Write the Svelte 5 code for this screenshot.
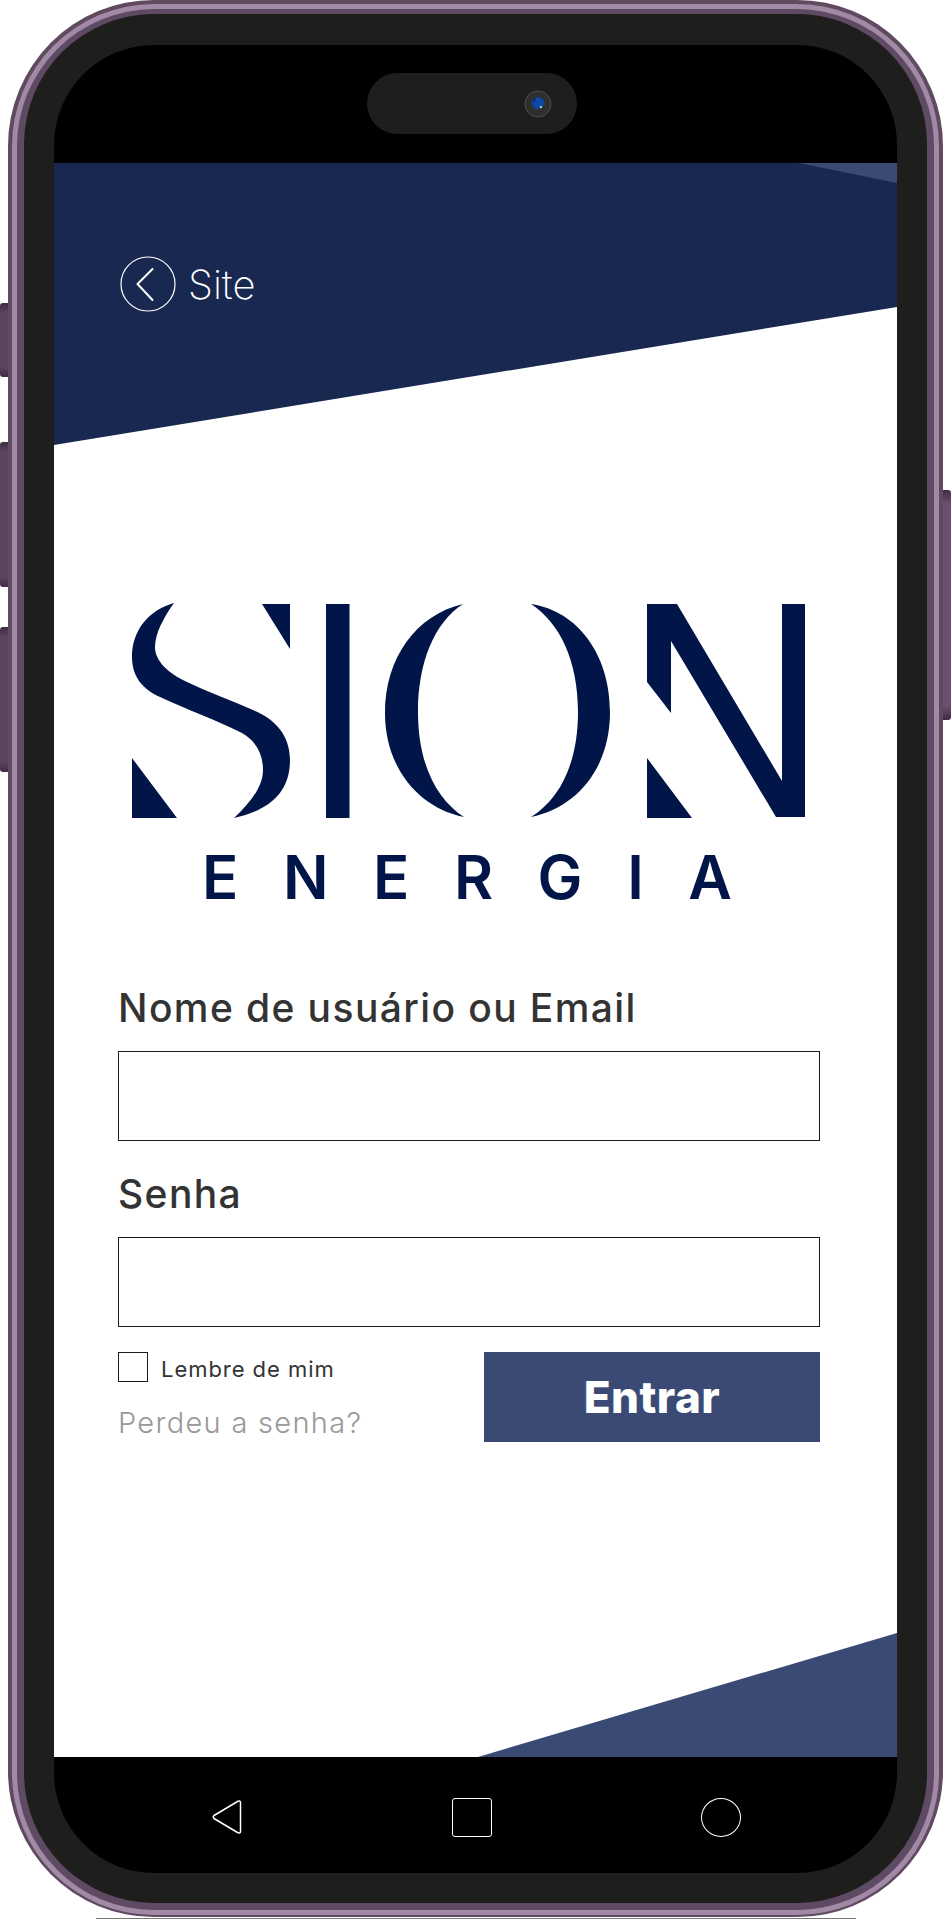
<script>
  const brand = 'ENERGIA'.split('');
</script>

<div class="page">
  <div class="phone">
    <!-- side buttons -->
    <span class="key key-a"></span>
    <span class="key key-b"></span>
    <span class="key key-c"></span>
    <span class="key key-power"></span>

    <div class="rim-light">
      <div class="rim-dark">
        <div class="bezel">
          <div class="display">
            <div class="notch-bar">
              <div class="notch">
                <svg width="28" height="28" viewBox="0 0 28 28">
                  <circle cx="14" cy="14" r="13" fill="#2f2f2f" stroke="#4c4c4c" />
                  <circle cx="14" cy="13" r="6" fill="#0b4aa8" />
                  <path d="M9 11a6 6 0 0 1 4-4 8 8 0 0 0-2 7Z" fill="#0a2a5c" />
                  <circle cx="17" cy="17" r="1.200" fill="#9fc7b8" />
                </svg>
              </div>
            </div>

            <main class="screen">
              <div class="band"></div>
              <div class="band-corner"></div>
              <div class="band-bottom"></div>

              <a class="back" href="#site">
                <svg width="56" height="56" viewBox="0 0 56 56" fill="none" stroke="#fff">
                  <circle cx="28" cy="28" r="27" stroke-width="1.2" />
                  <path d="M32.5 13 17.5 28 32.5 44" stroke-width="2" stroke-linecap="round" stroke-linejoin="round" />
                </svg>
                <span>Site</span>
              </a>

              <div class="logo">
                <svg width="673" height="215" viewBox="0 0 673 215" fill="#021548" aria-label="Sion">
                  <path d="M42 0C17 7 0 27 0 54 0 73 10 86 28 94 56 107 84 117 110 130 124 138 131 151 131 167 131 184 118 200 102 215 133 208 158 193 158 157 158 132 143 116 121 107 98 97 76 89 55 79 36 70 23 58 23 44 23 30 32 14 42 0Z" />
                  <path d="M130 1H158V46Z" />
                  <path d="M0 155 45 215H0Z" />
                  <path d="M194 1H217.500V215H194Z" />
                  <path d="M331 1C284 12 253 55 253 110 253 165 287 205 332 214 304 196 286 160 286 109 286 60 302 20 331 1Z" />
                  <path d="M399 1C446 8 478 52 478 109 478 166 444 205 399 214 428 196 446 160 446 109 446 58 428 20 399 1Z" />
                  <path d="M515 1H545L650 178V1H673V214H644L539 38V110L515 79Z" />
                  <path d="M515 155 560 215H515Z" />
                </svg>
                <div class="brand">
                  {#each brand as letter}
                    <span>{letter}</span>
                  {/each}
                </div>
              </div>

              <form class="login">
                <label class="field">
                  <span>Nome de usuário ou Email</span>
                  <input type="text" />
                </label>
                <label class="field">
                  <span>Senha</span>
                  <input type="password" />
                </label>
                <div class="actions">
                  <div class="extras">
                    <label class="remember">
                      <span class="box"></span>
                      <span class="remember-text">Lembre de mim</span>
                    </label>
                    <a class="lost" href="#senha">Perdeu a senha?</a>
                  </div>
                  <button type="button" class="enter">Entrar</button>
                </div>
              </form>
            </main>

            <nav class="nav-bar">
              <svg width="32" height="38" viewBox="0 0 32 38" fill="none" stroke="#fff" stroke-width="1.5" stroke-linejoin="round">
                <path d="M26.500 3.500C27.500 2.500 29.500 2.800 29.500 4.500V33.500C29.500 35.200 27.500 35.500 26.500 34.500L3 20.500C2 19.500 2 18.500 3 17.500Z" />
              </svg>
              <span class="nav-square"></span>
              <span class="nav-circle"></span>
            </nav>
          </div>
        </div>
      </div>
    </div>
  </div>
  <div class="shadow-line"></div>
</div>

<style>
  :global(body) {
    margin: 0;
    background: #fff;
  }

  .page {
    width: 951px;
    height: 1920px;
    font-family: Inter, "Liberation Sans", sans-serif;
    color: #333;
    overflow: hidden;
  }

  .phone {
    position: relative;
    box-sizing: border-box;
    width: 935px;
    height: 1917px;
    margin-left: 8px;
    padding: 4px 4px 2px 4px;
    border-radius: 146px;
    background: #5f4a60;
  }

  .rim-light {
    box-sizing: border-box;
    height: 100%;
    padding: 5px;
    border-radius: 142px;
    background: #a08aa5;
  }

  .rim-dark {
    box-sizing: border-box;
    height: 100%;
    padding: 5px 7px 7px 7px;
    border-radius: 137px;
    background: #5e4a62;
  }

  .bezel {
    box-sizing: border-box;
    height: 100%;
    padding: 31px 30px 30px 30px;
    border-radius: 130px;
    background: #1e1e1c;
  }

  .display {
    display: flex;
    flex-direction: column;
    height: 100%;
    border-radius: 100px;
    background: #000;
    overflow: hidden;
  }

  .key {
    position: absolute;
    width: 8px;
    background: linear-gradient(#3f2c42, #5a4560 10px, #5a4560 calc(100% - 10px), #3f2c42);
  }

  .key-a,
  .key-b,
  .key-c {
    left: -8px;
    border-radius: 3px 0 0 3px;
  }

  .key-a {
    top: 303px;
    height: 74px;
  }

  .key-b {
    top: 442px;
    height: 145px;
  }

  .key-c {
    top: 627px;
    height: 145px;
  }

  .key-power {
    right: -8px;
    top: 490px;
    height: 230px;
    background: linear-gradient(#3f2c42, #6c4f6e 14px, #6c4f6e calc(100% - 14px), #3f2c42);
    border-radius: 0 3px 3px 0;
  }

  .notch-bar {
    display: flex;
    justify-content: center;
    box-sizing: border-box;
    height: 118px;
    padding: 28px 8px 0 0;
  }

  .notch {
    display: flex;
    align-items: center;
    justify-content: flex-end;
    box-sizing: border-box;
    width: 210px;
    height: 61px;
    padding-right: 25px;
    border-radius: 31px;
    background: #1e1e1c;
  }

  .screen {
    position: relative;
    flex: 1;
    display: flex;
    flex-direction: column;
    padding: 94px 77px 0 64px;
    background: #fff;
    overflow: hidden;
  }

  .band,
  .band-corner,
  .band-bottom {
    position: absolute;
    right: 0;
  }

  .band {
    top: 0;
    left: 0;
    height: 282px;
    background: #192850;
    clip-path: polygon(0 0, 100% 0, 100% 144px, 0 100%);
  }

  .band-corner {
    top: 0;
    width: 98px;
    height: 20px;
    background: #3a4a75;
    clip-path: polygon(0 0, 100% 0, 100% 100%);
  }

  .band-bottom {
    bottom: 0;
    width: 419px;
    height: 124px;
    background: #3a4a75;
    clip-path: polygon(0 100%, 100% 0, 100% 100%);
  }

  .back {
    position: relative;
    display: flex;
    align-items: center;
    gap: 12px;
    height: 54px;
    margin-left: 2px;
    color: #fff;
    font-size: 40px;
    font-weight: 200;
    text-decoration: none;
  }

  .logo {
    position: relative;
    margin: 292px 0 0 14px;
  }

  .logo svg {
    display: block;
  }

  .brand {
    display: flex;
    justify-content: space-between;
    width: 530px;
    height: 44px;
    margin: 37px 0 0 70px;
    color: #021548;
    font-size: 60px;
    font-weight: 600;
    line-height: 44px;
  }

  .login {
    position: relative;
    margin-top: 81px;
  }

  .field {
    display: block;
    margin-bottom: 25px;
    font-size: 39px;
    font-weight: 500;
    letter-spacing: 1.4px;
    line-height: 56px;
  }

  .field span {
    display: block;
    margin-bottom: 15px;
  }

  .field input {
    display: block;
    box-sizing: border-box;
    width: 100%;
    height: 90px;
    border: 1px solid #1c1c1c;
    background: #fff;
    border-radius: 0;
  }

  .actions {
    display: flex;
    justify-content: space-between;
  }

  .extras {
    display: flex;
    flex-direction: column;
    gap: 23px;
  }

  .remember {
    display: flex;
    align-items: center;
    gap: 13px;
    font-size: 22px;
    font-weight: 400;
    letter-spacing: 0.95px;
  }

  .remember-text {
    padding-top: 3px;
  }

  .box {
    box-sizing: border-box;
    width: 30px;
    height: 30px;
    border: 1px solid #1c1c1c;
  }

  .lost {
    color: #999;
    font-size: 29px;
    font-weight: 300;
    letter-spacing: 1.3px;
    text-decoration: none;
  }

  .enter {
    width: 336px;
    height: 90px;
    border: 0;
    background: #3a4a75;
    color: #fff;
    font-family: inherit;
    font-size: 44px;
    font-weight: 800;
    letter-spacing: 0.5px;
  }

  .nav-bar {
    display: flex;
    align-items: flex-start;
    justify-content: space-between;
    box-sizing: border-box;
    height: 116px;
    padding: 41px 156px 0 157px;
  }

  .nav-square {
    box-sizing: border-box;
    width: 40px;
    height: 39px;
    border: 1.5px solid #fff;
    border-radius: 3px;
  }

  .nav-circle {
    box-sizing: border-box;
    width: 40px;
    height: 39px;
    border: 1.5px solid #fff;
    border-radius: 50%;
  }

  .shadow-line {
    width: 760px;
    height: 1px;
    margin: 1px 0 0 96px;
    background: #777;
  }
</style>
